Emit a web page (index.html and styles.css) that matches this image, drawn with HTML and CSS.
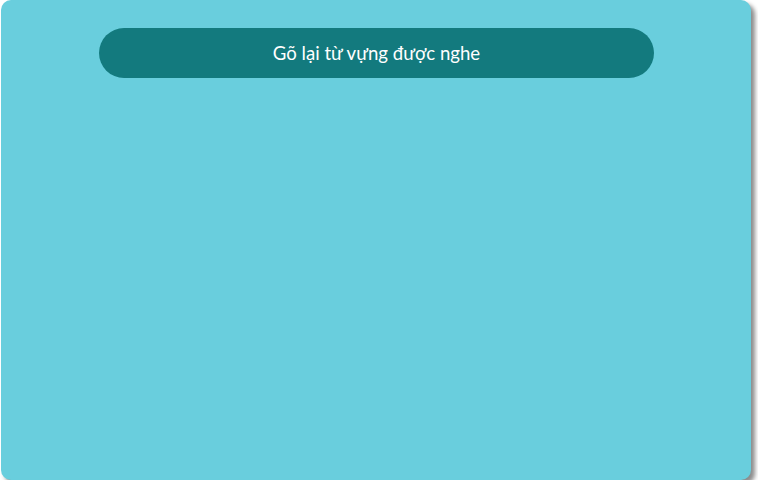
FILE: index.html
```html
<!DOCTYPE html>
<html lang="vi">
<head>
<meta charset="utf-8">
<link rel="stylesheet" href="styles.css">
</head>
<body>
<div class="card">
  <div class="title-pill">Gõ lại từ vựng được nghe</div>
</div>
</body>
</html>
```

FILE: styles.css
```css
html, body {
  margin: 0;
  padding: 0;
  background: #ffffff;
}
body {
  padding-left: 1px;
  font-family: Lato, "Open Sans", sans-serif;
}
.card {
  width: 750px;
  height: 480px;
  box-sizing: border-box;
  background: #69cedd;
  border-radius: 10px;
  box-shadow: 4px 4px 4px rgba(0, 0, 0, 0.45);
  padding-top: 28px;
}
.title-pill {
  width: 555px;
  height: 50px;
  margin-left: 98px;
  background: #137a7e;
  border-radius: 25px;
  color: #ffffff;
  font-size: 18.6px;
  display: flex;
  align-items: center;
  justify-content: center;
}
```
